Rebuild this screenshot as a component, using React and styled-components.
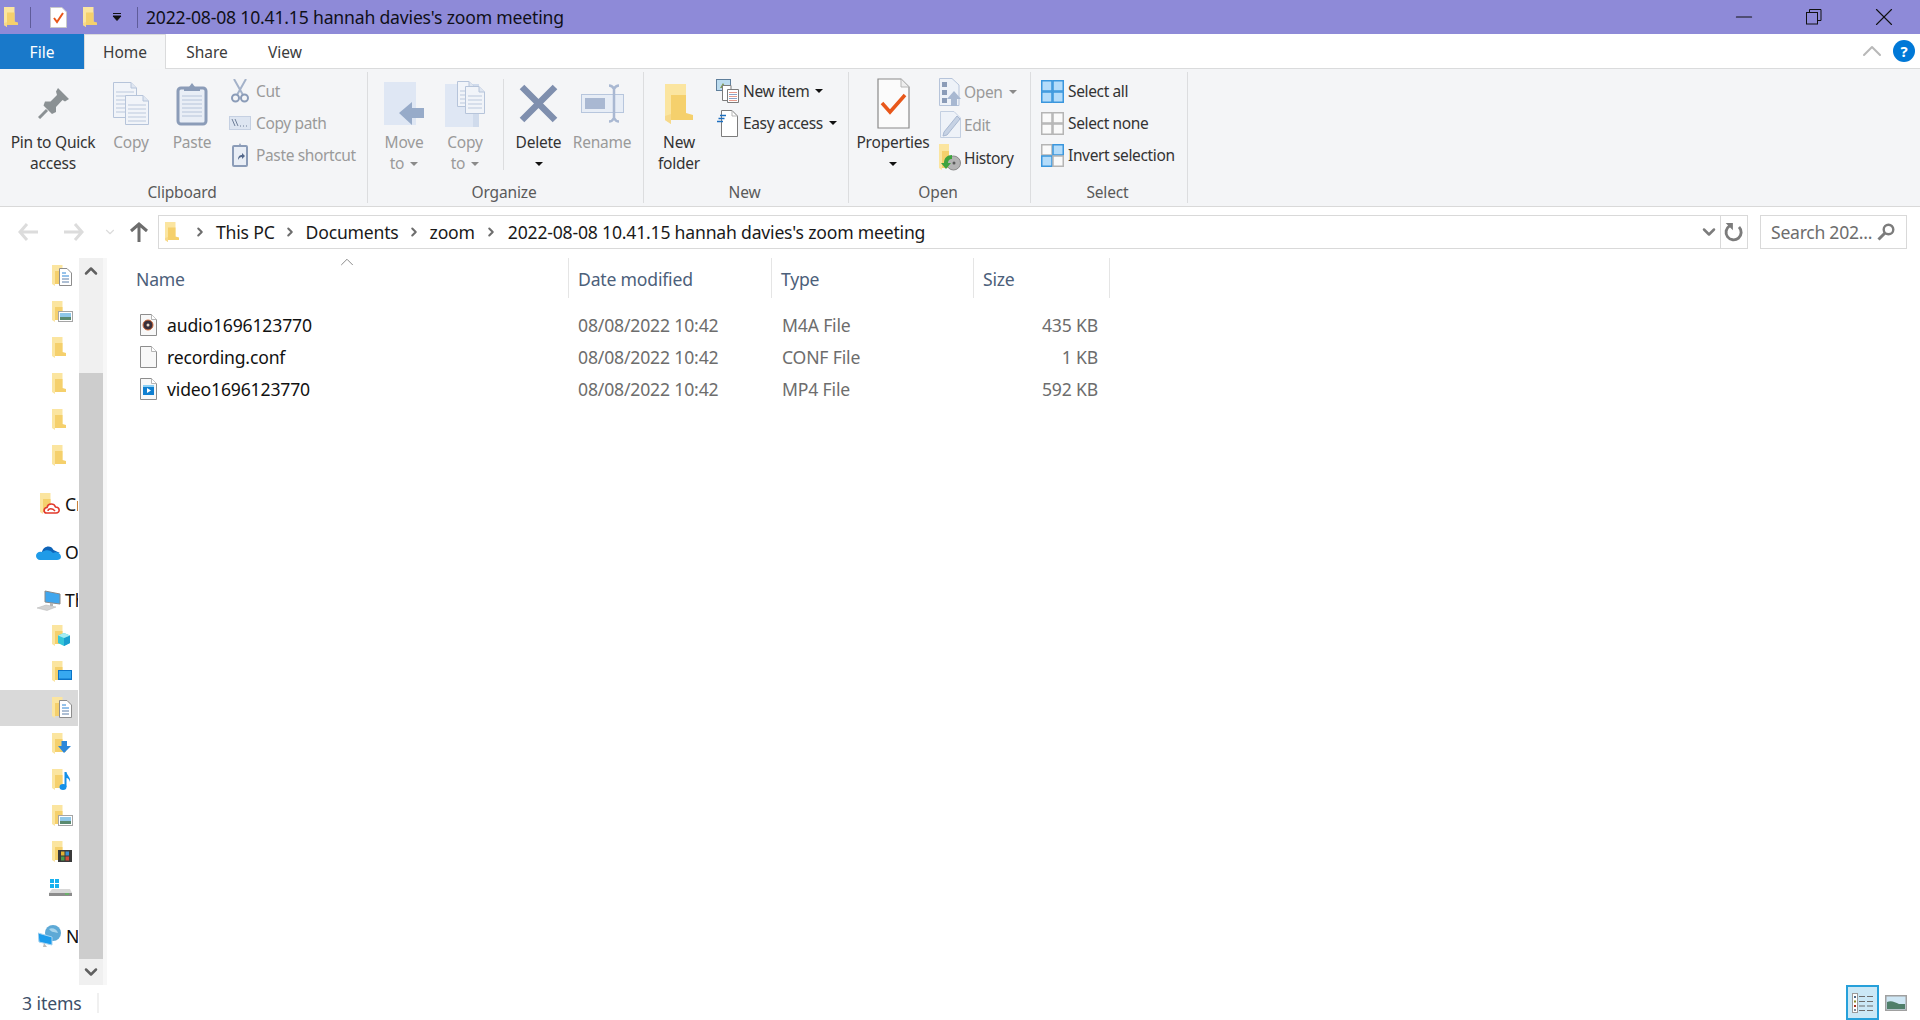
import React from "react";
import styled, { createGlobalStyle } from "styled-components";
import { ChevronDown, ChevronUp, ChevronRight, Minus, X } from "lucide-react";

const GlobalStyle = createGlobalStyle`
  html, body { margin: 0; padding: 0; background: #fff; }
  body { font-family: "Noto Sans", "Open Sans", sans-serif; overflow: hidden; }
  #root { width: 1920px; height: 1020px; }
  svg { flex: none; }
`;

const Window = styled.div`
  width: 1920px;
  height: 1020px;
  display: flex;
  flex-direction: column;
  overflow: hidden;
  color: #1a1a1a;
`;

/* title bar */
const TitleBar = styled.div`
  height: 34px;
  flex: none;
  display: flex;
  align-items: center;
  background: #8e8ad8;
  padding-left: 4px;
`;
const QuickItem = styled.span`
  display: flex;
  align-items: center;
  margin-left: ${({ $ml }) => $ml || 0}px;
`;
const QuickSep = styled.span`
  width: 1px;
  height: 21px;
  margin-left: ${({ $ml }) => $ml}px;
  background: #5f5c99;
`;
const Title = styled.span`
  margin-left: 8px;
  font-size: 17.6px;
  letter-spacing: -0.19px;
  color: #101018;
  white-space: nowrap;
`;
const WinControls = styled.div`
  margin-left: auto;
  display: flex;
  padding-right: 1px;
`;
const WinButton = styled.span`
  width: 70px;
  height: 34px;
  display: flex;
  align-items: center;
  justify-content: center;
`;

/* tabs */
const TabRow = styled.div`
  height: 35px;
  flex: none;
  display: flex;
  align-items: stretch;
  background: #fff;
  border-bottom: 1px solid #dadbdc;
  box-sizing: border-box;
`;
const FileTab = styled.div`
  width: 84px;
  margin-bottom: -1px;
  background: #1979ca;
  color: #fff;
  display: flex;
  align-items: center;
  justify-content: center;
  font-size: 15.5px;
`;
const Tab = styled.div`
  width: ${({ $w }) => $w}px;
  margin-bottom: ${({ $active }) => ($active ? "-1px" : 0)};
  display: flex;
  align-items: center;
  justify-content: center;
  box-sizing: border-box;
  font-size: 15.5px;
  color: #3c3c3c;
  background: ${({ $active }) => ($active ? "#f5f6f7" : "transparent")};
  border: 1px solid ${({ $active }) => ($active ? "#dadbdc" : "transparent")};
  border-bottom: 0;
`;
const TabTools = styled.div`
  margin-left: auto;
  display: flex;
  align-items: center;
  gap: 5px;
  padding-right: 5px;
`;
const HelpDot = styled.span`
  width: 22px;
  height: 22px;
  border-radius: 50%;
  background: #0078d7;
  color: #fff;
  font-size: 15px;
  font-weight: 700;
  display: flex;
  align-items: center;
  justify-content: center;
`;

/* ribbon */
const Ribbon = styled.div`
  height: 138px;
  flex: none;
  display: flex;
  box-sizing: border-box;
  padding-top: 3px;
  background: #f4f5f7;
  border-bottom: 1px solid #d9d9d9;
`;
const Group = styled.section`
  width: ${({ $w }) => $w}px;
  height: 131px;
  box-sizing: border-box;
  flex: none;
  display: flex;
  flex-direction: column;
  border-right: 1px solid #dcdddf;
`;
const GroupBody = styled.div`
  flex: 1;
  display: flex;
  padding-left: ${({ $pl }) => $pl || 0}px;
`;
const GroupLabel = styled.div`
  height: 20px;
  line-height: 20px;
  margin-bottom: 1px;
  padding-right: 3px;
  text-align: center;
  font-size: 15.5px;
  letter-spacing: -0.15px;
  color: #5a5a5a;
`;
const BigButton = styled.div`
  width: ${({ $w }) => $w}px;
  flex: none;
  padding-top: 3px;
  display: flex;
  flex-direction: column;
  align-items: center;
  text-align: center;
  font-size: 15.5px;
  letter-spacing: -0.22px;
  line-height: 21px;
  color: ${({ $off }) => ($off ? "#9a9a9a" : "#333")};
  white-space: nowrap;
`;
const BigIcon = styled.div`
  height: 57px;
  display: flex;
  align-items: center;
  justify-content: center;
`;
const Caret = styled.span`
  display: inline-block;
  vertical-align: middle;
  margin-left: ${({ $ml }) => $ml ?? 6}px;
  border-left: 4px solid transparent;
  border-right: 4px solid transparent;
  border-top: 4px solid ${({ $off }) => ($off ? "#8a8a8a" : "#111")};
`;
const CaretLine = styled.div`
  height: 21px;
  display: flex;
  align-items: center;
`;
const Divider = styled.div`
  width: 1px;
  height: 91px;
  margin: 7px 0 0 ${({ $ml }) => $ml}px;
  background: #dcdddf;
`;
const SmallColumn = styled.div`
  display: flex;
  flex-direction: column;
  padding-top: 3px;
  margin-left: ${({ $ml }) => $ml || 0}px;
`;
const SmallButton = styled.div`
  height: ${({ $h }) => $h || 32}px;
  display: flex;
  align-items: center;
  font-size: 15.5px;
  letter-spacing: -0.36px;
  white-space: nowrap;
  color: ${({ $off }) => ($off ? "#9a9a9a" : "#333")};
`;
const SmallIcon = styled.span`
  width: ${({ $w }) => $w || 24}px;
  margin-right: ${({ $gap }) => $gap ?? 3}px;
  flex: none;
  display: flex;
  align-items: center;
  justify-content: center;
`;

/* address bar */
const AddressRow = styled.div`
  height: 51px;
  flex: none;
  display: flex;
  align-items: center;
  padding: 0 13px 2px 0;
  box-sizing: border-box;
`;
const NavButtons = styled.div`
  width: 158px;
  flex: none;
  display: flex;
  align-items: center;
  padding-left: 18px;
  box-sizing: border-box;
`;
const NavSpace = styled.span`
  width: ${({ $w }) => $w}px;
`;
const AddressBox = styled.div`
  flex: 1;
  height: 34px;
  box-sizing: border-box;
  border: 1px solid #d9d9d9;
  display: flex;
  align-items: center;
  padding-left: 6px;
  font-size: 17.6px;
  letter-spacing: -0.2px;
  white-space: nowrap;
`;
const Crumb = styled.span`
  color: #1a1a1a;
`;
const CrumbArrow = styled.span`
  display: flex;
  box-sizing: border-box;
  width: ${({ $w }) => $w}px;
  padding-left: ${({ $pl }) => $pl || 0}px;
  justify-content: center;
  color: #6d6d6d;
`;
const BoxEnd = styled.div`
  margin-left: auto;
  height: 100%;
  display: flex;
  align-items: center;
`;
const Refresh = styled.span`
  width: 26px;
  height: 100%;
  margin-left: 1px;
  border-left: 1px solid #d9d9d9;
  display: flex;
  align-items: center;
  justify-content: center;
`;
const SearchBox = styled.div`
  width: 147px;
  height: 34px;
  margin-left: 12px;
  box-sizing: border-box;
  border: 1px solid #d9d9d9;
  display: flex;
  align-items: center;
  justify-content: space-between;
  padding: 0 11px 0 10px;
  font-size: 17.6px;
  letter-spacing: -0.27px;
  color: #6d6d6d;
  white-space: nowrap;
`;

/* body */
const Body = styled.div`
  flex: 1;
  min-height: 0;
  display: flex;
`;
const NavPane = styled.nav`
  width: 78px;
  flex: none;
  margin-right: 1px;
  overflow: hidden;
  display: flex;
  flex-direction: column;
`;
const NavRow = styled.div`
  height: 36px;
  flex: none;
  margin-top: ${({ $mt }) => $mt || 0}px;
  display: flex;
  align-items: center;
  padding-left: ${({ $indent }) => $indent}px;
  background: ${({ $selected }) => ($selected ? "#d9d9d9" : "transparent")};
  white-space: nowrap;
  font-size: 17.6px;
  color: #111;
`;
const NavLabel = styled.span`
  margin-left: ${({ $ml }) => $ml ?? 5}px;
`;
const ScrollBar = styled.div`
  width: 24px;
  flex: none;
  display: flex;
  flex-direction: column;
  background: #f0f0f0;
`;
const ScrollButton = styled.div`
  height: 26px;
  flex: none;
  display: flex;
  align-items: center;
  justify-content: center;
  color: #606060;
`;
const ScrollTrack = styled.div`
  flex: 1;
  display: flex;
  flex-direction: column;
  justify-content: flex-end;
`;
const ScrollThumb = styled.div`
  height: 586px;
  background: #cdcdcd;
`;
const Gutter = styled.div`
  width: 4px;
  flex: none;
  background: #f7f7f7;
`;
const Main = styled.main`
  flex: 1;
  min-width: 0;
  position: relative;
`;
const SortMark = styled.span`
  position: absolute;
  left: 229px;
  top: -7px;
  color: #808080;
  display: flex;
`;
const HeaderRow = styled.div`
  height: 40px;
  display: flex;
  margin-bottom: 11px;
`;
const HeaderCell = styled.div`
  width: ${({ $w }) => $w}px;
  box-sizing: border-box;
  padding: 2px 0 0 ${({ $pl }) => $pl || 9}px;
  border-right: 1px solid #e5e5e5;
  display: flex;
  align-items: center;
  font-size: 17.6px;
  letter-spacing: -0.2px;
  color: #4c607a;
`;
const FileRow = styled.div`
  height: 32px;
  display: flex;
  align-items: center;
  font-size: 17.6px;
  letter-spacing: -0.17px;
  white-space: nowrap;
`;
const NameCell = styled.div`
  width: 461px;
  box-sizing: border-box;
  padding-left: 33px;
  display: flex;
  align-items: center;
  gap: 10px;
  color: #111;
`;
const InfoCell = styled.div`
  width: ${({ $w }) => $w}px;
  box-sizing: border-box;
  padding-left: 10px;
  padding-right: ${({ $right }) => ($right ? "12px" : 0)};
  text-align: ${({ $right }) => ($right ? "right" : "left")};
  color: #6d6d6d;
`;

/* status bar */
const StatusBar = styled.footer`
  height: 35px;
  flex: none;
  display: flex;
  align-items: center;
  padding-left: 22px;
  font-size: 17.6px;
  letter-spacing: -0.1px;
  color: #3d4f68;
`;
const StatusSep = styled.span`
  width: 2px;
  height: 20px;
  margin-left: 15px;
  background: #f0f0f0;
`;
const ViewButtons = styled.div`
  margin-left: auto;
  height: 100%;
  display: flex;
  align-items: center;
  gap: 6px;
  padding-right: 13px;
`;
const ViewButton = styled.span`
  width: ${({ $active }) => ($active ? "33px" : "22px")};
  height: 35px;
  box-sizing: border-box;
  border: ${({ $active }) => ($active ? "2px solid #26a0da" : "0")};
  background: ${({ $active }) => ($active ? "#cbe8f6" : "transparent")};
  display: flex;
  align-items: center;
  justify-content: center;
`;

/* drawings */
const Folder = ({ w = 14, h = 20 }) => (
  <svg width={w} height={h} viewBox="0 0 14 20">
    <path d="M0 0H10.5V15H3V20L0 18Z" fill="#fbe5a0" />
    <path d="M3 5.5H10.5V14.5L14 15.5V18H3Z" fill="#f5d06c" />
    <path d="M3 15V20L0 18V16Z" fill="#f7d98a" />
  </svg>
);

const PageNote = () => (
  <svg width="17" height="21" viewBox="0 0 17 21">
    <path d="M.5.5H12L16.5 5V20.5H.5Z" fill="#fff" stroke="#c9c9c9" />
    <path d="M4 11L7 15L13 6" fill="none" stroke="#e8571a" strokeWidth="2" />
  </svg>
);

const Pin = () => (
  <svg width="31" height="31" viewBox="0 0 31 31">
    <path d="M20 0L31 11L27 13.5L24.5 12L18 19L18 24L14 26L5.5 17.5L7 13.5L12.5 13.5L19 7L18 3.5Z" fill="#8b9194" />
    <path d="M9 22L1 30" stroke="#8b9194" strokeWidth="3" />
  </svg>
);

const DocLines = ({ x, y, w, h }) => {
  const lines = [];
  for (let ly = y + 10; ly < y + h - 3; ly += 4) lines.push(<path key={ly} d={`M${x + 3} ${ly}H${x + w - 3}`} stroke="#bcc9dd" />);
  return (
    <>
      <path d={`M${x + .5} ${y + .5}H${x + w - 6}L${x + w - .5} ${y + 6}V${y + h - .5}H${x + .5}Z`} fill="#f1f4f9" stroke="#b6c4da" />
      <path d={`M${x + w - 6} ${y + .5}V${y + 6}H${x + w - .5}`} fill="#dfe6f1" stroke="#b6c4da" />
      {lines}
    </>
  );
};

const CopyIcon = () => (
  <svg width="36" height="43" viewBox="0 0 36 43">
    <DocLines x={0} y={0} w={24} h={36} />
    <DocLines x={12} y={13} w={24} h={30} />
  </svg>
);

const PasteIcon = () => (
  <svg width="32" height="44" viewBox="0 0 32 44">
    <rect x="2" y="6" width="28" height="36" rx="3" fill="#e9eef6" stroke="#8b9cb8" strokeWidth="3" />
    {[14, 18, 22, 26, 30, 34].map(y => <path key={y} d={`M6 ${y}H26`} stroke="#b6c4da" />)}
    <path d="M8 9V5H13L16 1L19 5H24V9Z" fill="#8b9cb8" />
  </svg>
);

const CutIcon = () => (
  <svg width="18" height="24" viewBox="0 0 18 24">
    <path d="M3 0L12 16M15 0L6 16" stroke="#a4b2c9" strokeWidth="2" fill="none" />
    <circle cx="4.5" cy="19" r="3.5" fill="none" stroke="#8b9cb8" strokeWidth="2" />
    <circle cx="13.5" cy="19" r="3.5" fill="none" stroke="#8b9cb8" strokeWidth="2" />
  </svg>
);

const CopyPathIcon = () => (
  <svg width="22" height="14" viewBox="0 0 22 14">
    <rect x=".5" y=".5" width="21" height="13" fill="#dde5f1" stroke="#c5d0e2" />
    <path d="M3 3L6 10M6 3L9 10" stroke="#6f7f99" />
    <path d="M11 10H12M14 10H15M17 10H18" stroke="#6f7f99" />
  </svg>
);

const PasteShortcutIcon = () => (
  <svg width="16" height="24" viewBox="0 0 16 24">
    <rect x="1" y="3" width="14" height="20" rx="1" fill="#e9eef6" stroke="#8b9cb8" strokeWidth="2" />
    <path d="M5 4V2H7L8 0L9 2H11V4Z" fill="#8b9cb8" />
    <path d="M6 17C6 13 8 12 10 12V10L13 13L10 16V14C8 14 7 15 6 17Z" fill="#54698c" />
  </svg>
);

const MoveToIcon = () => (
  <svg width="40" height="43" viewBox="0 0 40 43">
    <path d="M0 0H32V43H0Z" fill="#dfe7f4" />
    <path d="M15 31L28 20V26H40V36H28V43Z" fill="#97abc9" />
  </svg>
);

const CopyToIcon = () => (
  <svg width="40" height="46" viewBox="0 0 40 46">
    <path d="M0 3H34V46H0Z" fill="#dfe7f4" />
    <path d="M28 3H34V46H28Z" fill="#d0dbec" />
    <DocLines x={12} y={0} w={18} h={26} />
    <DocLines x={20} y={5} w={20} h={28} />
  </svg>
);

const DeleteIcon = () => (
  <svg width="39" height="39" viewBox="0 0 39 39">
    <path d="M3 3L36 36M36 3L3 36" stroke="#7f8fae" strokeWidth="6.5" />
  </svg>
);

const RenameIcon = () => (
  <svg width="43" height="39" viewBox="0 0 43 39">
    <rect x=".5" y="10.5" width="42" height="18" fill="#e7edf6" stroke="#b7c6dd" />
    <rect x="4" y="14" width="20" height="11" fill="#a9b8d2" />
    <path d="M28 1.5C31 1.5 32 3 33 5V34C34 36 35 37.5 38 37.5M38 1.5C35 1.5 34 3 33 5M33 34C32 36 31 37.5 28 37.5" fill="none" stroke="#a9b8d2" strokeWidth="2.5" />
  </svg>
);

const NewItemIcon = () => (
  <svg width="23" height="24" viewBox="0 0 23 24">
    <rect x=".5" y=".5" width="14" height="11" fill="#bcdcef" stroke="#5f7f9c" />
    <path d="M4 9L7 4L10 9Z" fill="#7d9a52" />
    <path d="M6.5 6.5H15V21.5H6.5Z" fill="#fff" stroke="#7c7c7c" />
    <path d="M11.5 10.5H22.5V23.5H11.5Z" fill="#fff" stroke="#7c7c7c" />
    {[13, 15, 17, 19, 21].map(y => <path key={y} d={`M13 ${y + .5}H21`} stroke={y % 4 === 1 ? "#e59a8c" : "#8aa3c7"} />)}
  </svg>
);

const EasyAccessIcon = () => (
  <svg width="21" height="27" viewBox="0 0 21 27">
    <path d="M4.5.5H15L20.5 6V26.5H4.5Z" fill="#fff" stroke="#7c7c7c" />
    <path d="M15 .5V6H20.5" fill="none" stroke="#b5b5b5" />
    <path d="M3 5.5H9M1.5 8.5H7.5M0 11.5H6" stroke="#1d6fc0" strokeWidth="1.5" />
  </svg>
);

const PropertiesIcon = () => (
  <svg width="33" height="51" viewBox="0 0 33 51">
    <path d="M1 1H24L32 9V50H1Z" fill="#fbfbfb" stroke="#8a8a8a" strokeWidth="1.2" />
    <path d="M24 1V9H32" fill="#eee" stroke="#b5b5b5" />
    <path d="M5 25L13 34L28 17" fill="none" stroke="#e8571a" strokeWidth="3.5" />
  </svg>
);

const OpenIcon = () => (
  <svg width="22" height="28" viewBox="0 0 22 28">
    <path d="M.5.5H13L20 7V27.5H.5Z" fill="#eef2f8" stroke="#b6c4da" />
    <path d="M3 4H8V9H3ZM3 12H8V17H3ZM3 20H8V25H3Z" fill="#8b9cb8" />
    <path d="M15 13L22 21H18V28H12V21H8Z" fill="#a8b8d1" />
  </svg>
);

const EditIcon = () => (
  <svg width="21" height="27" viewBox="0 0 21 27">
    <path d="M.5.5H14L20.5 7V26.5H.5Z" fill="#eef2f8" stroke="#c3cfe1" />
    <path d="M17 5L20 8L7 24L3 25L4 21Z" fill="#c6d2e4" stroke="#a8b8d1" />
  </svg>
);

const HistoryIcon = () => (
  <svg width="22" height="27" viewBox="0 0 22 27">
    <path d="M0 0H10V17H3V26L0 24Z" fill="#fbe5a0" />
    <path d="M3 7H10V20L13 21V24H3Z" fill="#f5d06c" />
    <circle cx="14.5" cy="19" r="7" fill="#b4b4b4" stroke="#8a8a8a" />
    <path d="M5 19C5 14 8 11 13 11V15C10 15 9 17 9 19H12L7 25L2 19Z" fill="#3ea33e" />
    <circle cx="15" cy="19" r="1.5" fill="#5a5a5a" />
  </svg>
);

const SelectGrid = ({ on = [true, true, true, true] }) => (
  <svg width="23" height="23" viewBox="0 0 23 23">
    {[[.75, .75], [12, .75], [.75, 12], [12, 12]].map(([x, y], i) => (
      <rect
        key={i}
        x={x}
        y={y}
        width="10.25"
        height="10.25"
        fill={on[i] ? "#b4dcfa" : "#fafafa"}
        stroke={on[i] ? "#3a96dd" : "#b5b5b5"}
        strokeWidth="1.5"
      />
    ))}
  </svg>
);

const NavArrow = ({ color, dir = "left", size = 20 }) => (
  <svg width={size} height={size} viewBox="0 0 20 20" style={{ transform: dir === "right" ? "scaleX(-1)" : dir === "up" ? "rotate(90deg)" : "none" }}>
    <path d="M9 2L2 10L9 18M2 10H20" fill="none" stroke={color} strokeWidth="3" />
  </svg>
);

const RefreshIcon = () => (
  <svg width="20" height="20" viewBox="0 0 18 18">
    <path d="M13.5 4.5A6.8 6.8 0 1 1 5 3.5" fill="none" stroke="#7c7c7c" strokeWidth="2.6" />
    <path d="M1.5 1H8V7.5Z" fill="#7c7c7c" />
  </svg>
);

const SearchIcon = () => (
  <svg width="18" height="18" viewBox="0 0 18 18">
    <circle cx="11.5" cy="6.5" r="4.8" fill="none" stroke="#7c7c7c" strokeWidth="2.4" />
    <path d="M8 10L1.5 16.5" stroke="#7c7c7c" strokeWidth="3" />
  </svg>
);

const RestoreIcon = () => (
  <svg width="16" height="16" viewBox="0 0 16 16">
    <rect x=".5" y="3.5" width="11" height="11.5" fill="none" stroke="#111" />
    <path d="M3.5 3.5V.5H15V11.5H11.5" fill="none" stroke="#111" />
  </svg>
);

const FolderOver = ({ children }) => (
  <svg width="22" height="22" viewBox="0 0 22 22">
    <path d="M0 0H10.5V15H3V21L0 19Z" fill="#fbe5a0" />
    <path d="M3 6H10.5V15L14 16V19H3Z" fill="#f5d06c" />
    {children}
  </svg>
);

const OverDoc = () => (
  <>
    <path d="M7.5 3.5H15L19.5 8V20.5H7.5Z" fill="#fff" stroke="#8d8d8d" />
    <path d="M10 8H14M10 11H17" stroke="#2f86d6" />
    <path d="M10 14H17M10 17H17" stroke="#5d7ea8" />
  </>
);
const OverPicture = () => (
  <>
    <rect x="6.5" y="10.5" width="14" height="10" fill="#fff" stroke="#a5a5a5" />
    <rect x="8" y="12" width="11" height="4" fill="#8fc7e8" />
    <path d="M8 16H19V19H8Z" fill="#5a8a70" />
  </>
);
const OverCube = () => (
  <>
    <path d="M12 8L18 10.5V18L12 21L6 18V10.5Z" fill="#35c6d8" />
    <path d="M12 13V21L18 18V10.5Z" fill="#1a9ed0" />
    <path d="M12 8L18 10.5L12 13L6 10.5Z" fill="#a5ecf2" />
  </>
);
const OverDesktop = () => (
  <>
    <rect x="6" y="9" width="14" height="10" fill="#0a74c8" />
    <rect x="7" y="10" width="12" height="7.5" fill="#37a9f0" />
  </>
);
const OverDown = () => (
  <path d="M9.5 8H15V13H19L12 20L6 13H9.5Z" fill="#2b87d9" />
);
const OverMusic = () => (
  <>
    <path d="M12.5 3H14.5C15 7 19 8 18 13C17 10 16 9 14.5 9V18H12.5Z" fill="#1490e8" />
    <ellipse cx="11" cy="18" rx="3.5" ry="3" fill="#1490e8" />
  </>
);
const OverVideo = () => (
  <>
    <rect x="6" y="9" width="14" height="12" fill="#3a3a3a" />
    <rect x="9" y="10.5" width="3.5" height="4" fill="#e2b234" />
    <rect x="13.5" y="10.5" width="3.5" height="4" fill="#3d8fd1" />
    <rect x="9" y="15.5" width="3.5" height="4" fill="#4b9b4b" />
    <rect x="13.5" y="15.5" width="3.5" height="4" fill="#d14b3a" />
  </>
);

const CreativeFolder = () => (
  <svg width="22" height="22" viewBox="0 0 22 22">
    <path d="M0 0H10.5V15H3V21L0 19Z" fill="#fbe5a0" />
    <path d="M3 6H10.5V15L14 16V19H3Z" fill="#f5d06c" />
    <path d="M6.5 20C3.5 20 3 15 7 14.5C8 10 14 10 15.5 14C20 14 20.5 20 16 20Z" fill="#fff" stroke="#e13a2b" strokeWidth="1.6" />
    <path d="M8 18C8 15 13 15 15 18" fill="none" stroke="#e13a2b" strokeWidth="1.4" />
  </svg>
);
const OneDriveIcon = () => (
  <svg width="25" height="16" viewBox="0 0 25 16">
    <path d="M6 8C7 2 15 0 17.5 6L24 9H3Z" fill="#0d63b8" />
    <path d="M0 12C0 9 3 7 6 8C10 5 15 6 17 9C20 7 25 9 25 13C25 15 23 16 21 16H4C2 16 0 14 0 12Z" fill="#1f9be8" />
  </svg>
);
const PcIcon = () => (
  <svg width="24" height="21" viewBox="0 0 24 21">
    <path d="M8 1L23 4V14L8 12Z" fill="#3fa6ee" stroke="#8a8a8a" />
    <path d="M13 13H16V16H13Z" fill="#b5b5b5" />
    <path d="M0 18L9 15L19 17L10 20.5Z" fill="#d2d2d2" stroke="#b5b5b5" strokeWidth=".5" />
  </svg>
);
const DriveIcon = () => (
  <svg width="23" height="18" viewBox="0 0 23 18">
    <path d="M1 0H5V4H1ZM6 0H10V4H6ZM1 5H5V9H1ZM6 5H10V9H6Z" fill="#17b1ef" />
    <path d="M0 14L3 10H21L23 14V17H0Z" fill="#d8d8d8" />
    <path d="M0 14H23V17H0Z" fill="#8c8c8c" />
    <path d="M16 15H20" stroke="#4bd34b" />
  </svg>
);
const NetworkIcon = () => (
  <svg width="23" height="22" viewBox="0 0 23 22">
    <circle cx="15" cy="8" r="8" fill="#5da9d6" />
    <path d="M11 4C14 2 19 4 20 8C17 7 14 8 11 4Z" fill="#a7d4ec" />
    <path d="M0 8L14 12V20L1 17Z" fill="#1c9cec" stroke="#a8d4f0" />
    <path d="M6 18L9 22H5Z" fill="#bcbcbc" />
  </svg>
);

const FileIcon = ({ children }) => (
  <svg width="17" height="22" viewBox="0 0 17 22">
    <path d="M.5.5H11.5L16.5 5.5V21.5H.5Z" fill="#f8f8f8" stroke="#8d8d8d" />
    <path d="M11.5.5V5.5H16.5" fill="#fff" stroke="#b5b5b5" />
    {children}
  </svg>
);

const DetailsIcon = () => (
  <svg width="21" height="20" viewBox="0 0 21 20">
    <rect x=".5" y=".5" width="5" height="19" fill="#fff" stroke="#9a9a9a" />
    <rect x="2" y="3" width="2" height="2" fill="#4a6a8a" />
    <rect x="2" y="7.5" width="2" height="2" fill="#8a8a2a" />
    <rect x="2" y="12" width="2" height="2" fill="#a8301f" />
    <rect x="2" y="16" width="2" height="2" fill="#7a8a9a" />
    {[3.5, 8.5, 13, 17.5].map(y => <path key={y} d={`M7 ${y}H13M15 ${y}H21`} stroke="#6d6d6d" strokeWidth="1.2" />)}
  </svg>
);
const ThumbIcon = () => (
  <svg width="22" height="16" viewBox="0 0 22 16">
    <rect x=".75" y=".75" width="20.5" height="14.5" fill="#cfe7f5" stroke="#a0a0a0" strokeWidth="1.5" />
    <path d="M2 7C6 5 10 7 14 9H20V14H2Z" fill="#4f7f6a" />
  </svg>
);

const navRows = [
  { icon: <FolderOver><OverDoc /></FolderOver> },
  { icon: <FolderOver><OverPicture /></FolderOver> },
  { icon: <FolderOver /> },
  { icon: <FolderOver /> },
  { icon: <FolderOver /> },
  { icon: <FolderOver /> },
  { icon: <CreativeFolder />, indent: 40, label: "Cr", mt: 12, ml: 3 },
  { icon: <OneDriveIcon />, indent: 36, label: "O", mt: 12, ml: 4 },
  { icon: <PcIcon />, indent: 37, label: "Th", mt: 12, ml: 4 },
  { icon: <FolderOver><OverCube /></FolderOver> },
  { icon: <FolderOver><OverDesktop /></FolderOver> },
  { icon: <FolderOver><OverDoc /></FolderOver>, selected: true },
  { icon: <FolderOver><OverDown /></FolderOver> },
  { icon: <FolderOver><OverMusic /></FolderOver> },
  { icon: <FolderOver><OverPicture /></FolderOver> },
  { icon: <FolderOver><OverVideo /></FolderOver> },
  { icon: <DriveIcon />, indent: 49 },
  { icon: <NetworkIcon />, indent: 38, label: "N", mt: 12, ml: 5 },
];

const files = [
  {
    name: "audio1696123770", type: "M4A File", size: "435 KB",
    art: <><circle cx="8" cy="11" r="5" fill="#3a2f3a" stroke="#d06a3a" /><circle cx="8" cy="11" r="1.5" fill="#e8d8c8" /></>,
  },
  { name: "recording.conf", type: "CONF File", size: "1 KB" },
  {
    name: "video1696123770", type: "MP4 File", size: "592 KB",
    art: <><rect x="3" y="7" width="11" height="10" fill="#0f7fd0" /><path d="M3 7H14V9H3Z" fill="#8cd0f5" /><path d="M7 10L11 12.5L7 15Z" fill="#fff" /></>,
  },
];

export default function App() {
  return (
    <Window>
      <GlobalStyle />
      <TitleBar>
        <Folder />
        <QuickSep $ml={12} />
        <QuickItem $ml={19}><PageNote /></QuickItem>
        <QuickItem $ml={16}><Folder /></QuickItem>
        <QuickItem $ml={15}>
          <svg width="10" height="8" viewBox="0 0 10 8"><path d="M1 .5H9M1 3L5 7.5L9 3Z" stroke="#111" fill="#111" /></svg>
        </QuickItem>
        <QuickSep $ml={15} />
        <Title>2022-08-08 10.41.15 hannah davies's zoom meeting</Title>
        <WinControls>
          <WinButton><Minus size={26} strokeWidth={1} color="#111" /></WinButton>
          <WinButton><RestoreIcon /></WinButton>
          <WinButton><X size={30} strokeWidth={0.9} color="#111" /></WinButton>
        </WinControls>
      </TitleBar>

      <TabRow>
        <FileTab>File</FileTab>
        <Tab $w={82} $active>Home</Tab>
        <Tab $w={82}>Share</Tab>
        <Tab $w={74}>View</Tab>
        <TabTools>
          <ChevronUp size={32} strokeWidth={1.5} color="#b8b8b8" />
          <HelpDot>?</HelpDot>
        </TabTools>
      </TabRow>

      <Ribbon>
        <Group $w={368}>
          <GroupBody>
            <BigButton $w={106}><BigIcon><Pin /></BigIcon>Pin to Quick<br />access</BigButton>
            <BigButton $w={50} $off><BigIcon><CopyIcon /></BigIcon>Copy</BigButton>
            <BigButton $w={72} $off><BigIcon><PasteIcon /></BigIcon>Paste</BigButton>
            <SmallColumn>
              <SmallButton $off><SmallIcon $w={24} $gap={4}><CutIcon /></SmallIcon>Cut</SmallButton>
              <SmallButton $off><SmallIcon $w={24} $gap={4}><CopyPathIcon /></SmallIcon>Copy path</SmallButton>
              <SmallButton $off><SmallIcon $w={24} $gap={4}><PasteShortcutIcon /></SmallIcon>Paste shortcut</SmallButton>
            </SmallColumn>
          </GroupBody>
          <GroupLabel>Clipboard</GroupLabel>
        </Group>
        <Group $w={276}>
          <GroupBody>
            <BigButton $w={72} $off><BigIcon><MoveToIcon /></BigIcon>Move<CaretLine>to<Caret $off /></CaretLine></BigButton>
            <BigButton $w={50} $off><BigIcon><CopyToIcon /></BigIcon>Copy<CaretLine>to<Caret $off /></CaretLine></BigButton>
            <Divider $ml={13} />
            <BigButton $w={69}><BigIcon><DeleteIcon /></BigIcon>Delete<CaretLine><Caret $ml={0} /></CaretLine></BigButton>
            <BigButton $w={58} $off><BigIcon><RenameIcon /></BigIcon>Rename</BigButton>
          </GroupBody>
          <GroupLabel>Organize</GroupLabel>
        </Group>
        <Group $w={205}>
          <GroupBody>
            <BigButton $w={70}><BigIcon><Folder w={28} h={42} /></BigIcon>New<br />folder</BigButton>
            <SmallColumn $ml={1}>
              <SmallButton><SmallIcon $w={24} $gap={4}><NewItemIcon /></SmallIcon>New item<Caret /></SmallButton>
              <SmallButton><SmallIcon $w={24} $gap={4}><EasyAccessIcon /></SmallIcon>Easy access<Caret /></SmallButton>
            </SmallColumn>
          </GroupBody>
          <GroupLabel>New</GroupLabel>
        </Group>
        <Group $w={182}>
          <GroupBody>
            <BigButton $w={88}><BigIcon><PropertiesIcon /></BigIcon>Properties<CaretLine><Caret $ml={0} /></CaretLine></BigButton>
            <SmallColumn $ml={2}>
              <SmallButton $h={33} $off><SmallIcon $w={22} $gap={3}><OpenIcon /></SmallIcon>Open<Caret $off /></SmallButton>
              <SmallButton $h={33} $off><SmallIcon $w={22} $gap={3}><EditIcon /></SmallIcon>Edit</SmallButton>
              <SmallButton $h={33}><SmallIcon $w={22} $gap={3}><HistoryIcon /></SmallIcon>History</SmallButton>
            </SmallColumn>
          </GroupBody>
          <GroupLabel>Open</GroupLabel>
        </Group>
        <Group $w={157}>
          <GroupBody $pl={10}>
            <SmallColumn>
              <SmallButton><SmallIcon $w={23} $gap={4}><SelectGrid /></SmallIcon>Select all</SmallButton>
              <SmallButton><SmallIcon $w={23} $gap={4}><SelectGrid on={[false, false, false, false]} /></SmallIcon>Select none</SmallButton>
              <SmallButton><SmallIcon $w={23} $gap={4}><SelectGrid on={[false, true, true, false]} /></SmallIcon>Invert selection</SmallButton>
            </SmallColumn>
          </GroupBody>
          <GroupLabel>Select</GroupLabel>
        </Group>
      </Ribbon>

      <AddressRow>
        <NavButtons>
          <NavArrow color="#dcdcdc" />
          <NavSpace $w={26} />
          <NavArrow color="#dcdcdc" dir="right" />
          <ChevronDown size={14} strokeWidth={2} color="#dcdcdc" style={{ marginLeft: 19 }} />
          <NavSpace $w={12} />
          <NavArrow color="#6d6d6d" dir="up" />
        </NavButtons>
        <AddressBox>
          <Folder />
          <CrumbArrow $w={37} $pl={4}><ChevronRight size={14} strokeWidth={3.5} /></CrumbArrow>
          <Crumb>This PC</Crumb>
          <CrumbArrow $w={31}><ChevronRight size={14} strokeWidth={3.5} /></CrumbArrow>
          <Crumb>Documents</Crumb>
          <CrumbArrow $w={31}><ChevronRight size={14} strokeWidth={3.5} /></CrumbArrow>
          <Crumb>zoom</Crumb>
          <CrumbArrow $w={33}><ChevronRight size={14} strokeWidth={3.5} /></CrumbArrow>
          <Crumb>2022-08-08 10.41.15 hannah davies's zoom meeting</Crumb>
          <BoxEnd>
            <ChevronDown size={20} strokeWidth={3} color="#7c7c7c" />
            <Refresh><RefreshIcon /></Refresh>
          </BoxEnd>
        </AddressBox>
        <SearchBox>
          Search 202...
          <SearchIcon />
        </SearchBox>
      </AddressRow>

      <Body>
        <NavPane>
          {navRows.map((row, i) => (
            <NavRow key={i} $indent={row.indent ?? 52} $selected={row.selected} $mt={row.mt}>
              {row.icon}
              {row.label && <NavLabel $ml={row.ml}>{row.label}</NavLabel>}
            </NavRow>
          ))}
        </NavPane>
        <ScrollBar>
          <ScrollButton><ChevronUp size={20} strokeWidth={3} /></ScrollButton>
          <ScrollTrack><ScrollThumb /></ScrollTrack>
          <ScrollButton><ChevronDown size={20} strokeWidth={3} /></ScrollButton>
        </ScrollBar>
        <Gutter />
        <Main>
          <SortMark><ChevronUp size={22} strokeWidth={1} /></SortMark>
          <HeaderRow>
            <HeaderCell $w={462} $pl={29}>Name</HeaderCell>
            <HeaderCell $w={203}>Date modified</HeaderCell>
            <HeaderCell $w={202}>Type</HeaderCell>
            <HeaderCell $w={136}>Size</HeaderCell>
          </HeaderRow>
          {files.map(file => (
            <FileRow key={file.name}>
              <NameCell><FileIcon>{file.art}</FileIcon>{file.name}</NameCell>
              <InfoCell $w={204}>08/08/2022 10:42</InfoCell>
              <InfoCell $w={202}>{file.type}</InfoCell>
              <InfoCell $w={136} $right>{file.size}</InfoCell>
            </FileRow>
          ))}
        </Main>
      </Body>

      <StatusBar>
        3 items
        <StatusSep />
        <ViewButtons>
          <ViewButton $active><DetailsIcon /></ViewButton>
          <ViewButton><ThumbIcon /></ViewButton>
        </ViewButtons>
      </StatusBar>
    </Window>
  );
}
